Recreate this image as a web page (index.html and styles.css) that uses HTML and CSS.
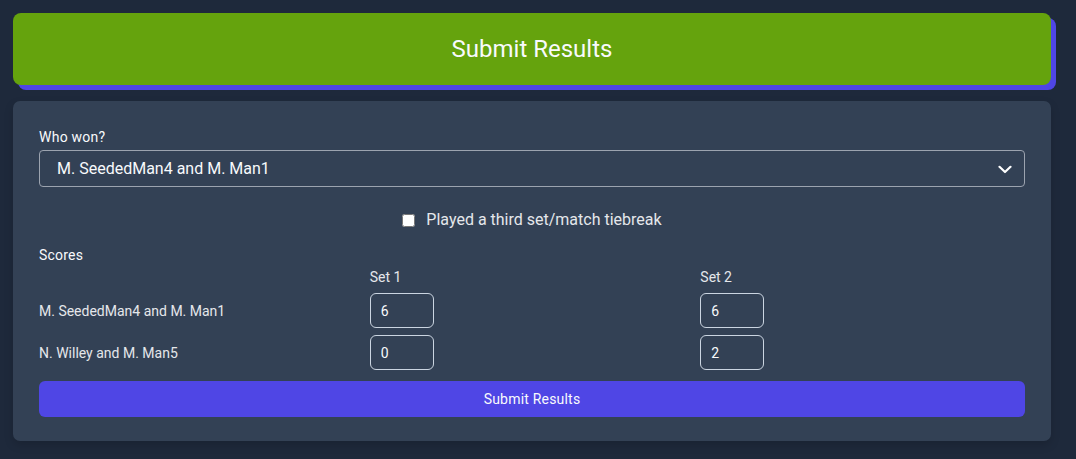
FILE: index.html
```html
<!DOCTYPE html>
<html lang="en">
<head>
<meta charset="utf-8">
<title>Submit Results</title>
<link rel="stylesheet" href="styles.css">
</head>
<body>
<main class="page">
  <button class="hero-btn" type="button">Submit Results</button>
  <section class="card">
    <label class="field-label" for="winner">Who won?</label>
    <div class="select-wrap">
      <select id="winner" class="select">
        <option>M. SeededMan4 and M. Man1</option>
        <option>N. Willey and M. Man5</option>
      </select>
      <svg class="chevron" width="14" height="9" viewBox="0 0 14 9" aria-hidden="true">
        <path d="M1.5 1.8 L7 7 L12.5 1.8" fill="none" stroke="#ffffff" stroke-width="2.2" stroke-linecap="round" stroke-linejoin="round"/>
      </svg>
    </div>
    <div class="check-row">
      <input type="checkbox" id="third" class="check">
      <label for="third" class="check-label">Played a third set/match tiebreak</label>
    </div>
    <div class="scores-title">Scores</div>
    <div class="scores">
      <div></div>
      <div class="set-head">Set 1</div>
      <div class="set-head">Set 2</div>

      <div class="team">M. SeededMan4 and M. Man1</div>
      <div><input class="score" type="text" value="6"></div>
      <div><input class="score" type="text" value="6"></div>

      <div class="team">N. Willey and M. Man5</div>
      <div><input class="score" type="text" value="0"></div>
      <div><input class="score" type="text" value="2"></div>
    </div>
    <button class="submit-btn" type="button">Submit Results</button>
  </section>
</main>
</body>
</html>
```

FILE: styles.css
```css
* { box-sizing: border-box; }

html, body {
  margin: 0;
  height: 100%;
}

body {
  background: #1e293b;
  font-family: Roboto, "Liberation Sans", sans-serif;
  color: #f1f5f9;
}

.page {
  padding: 13px 25px 13px 13px;
  display: flex;
  flex-direction: column;
}

.hero-btn {
  display: block;
  width: 100%;
  height: 72px;
  border: none;
  border-radius: 8px;
  background: #65a30d;
  color: #f8fafc;
  font-family: Roboto, "Liberation Sans", sans-serif;
  font-size: 24px;
  font-weight: 400;
  box-shadow: 5px 5px 0 #4f46e5;
  margin: 0 0 16px 0;
  padding: 0;
  cursor: pointer;
}

.card {
  background: #334155;
  border-radius: 7px;
  padding: 26px 26px 24px 26px;
  box-shadow: 0 4px 10px rgba(0, 0, 0, 0.15);
  display: flex;
  flex-direction: column;
}

.field-label {
  font-size: 14px;
  line-height: 20px;
  letter-spacing: 0.25px;
  color: #f8fafc;
  margin-bottom: 3px;
}

.select-wrap {
  position: relative;
}

.select {
  -webkit-appearance: none;
  appearance: none;
  width: 100%;
  height: 37px;
  background: #334155;
  border: 1px solid #9ca3af;
  border-radius: 4px;
  color: #f8fafc;
  font-family: Roboto, "Liberation Sans", sans-serif;
  font-size: 16px;
  padding: 0 40px 0 17px;
  outline: none;
}

.chevron {
  position: absolute;
  right: 13px;
  top: 15px;
  pointer-events: none;
}

.check-row {
  display: flex;
  justify-content: center;
  align-items: center;
  gap: 11px;
  margin-top: 21px;
  height: 24px;
}

.check {
  width: 13px;
  height: 13px;
  margin: 0;
}

.check-label {
  font-size: 16px;
  line-height: 24px;
  color: #e5e7eb;
}

.scores-title {
  margin-top: 13px;
  font-size: 14px;
  line-height: 20px;
  letter-spacing: 0.2px;
  color: #f8fafc;
}

.scores {
  display: grid;
  grid-template-columns: 1fr 1fr 1fr;
  column-gap: 6px;
  row-gap: 7px;
  margin-top: 2px;
  align-items: center;
}

.set-head {
  font-size: 14px;
  line-height: 20px;
  color: #e5e7eb;
  margin-bottom: -1px;
}

.team {
  font-size: 14px;
  line-height: 20px;
  color: #e5e7eb;
}

.score {
  display: block;
  width: 64px;
  height: 35px;
  background: #334155;
  border: 1px solid #cbd5e1;
  border-radius: 6px;
  color: #f8fafc;
  font-family: Roboto, "Liberation Sans", sans-serif;
  font-size: 14px;
  padding: 0 10px;
  outline: none;
}

.submit-btn {
  margin-top: 11px;
  width: 100%;
  height: 36px;
  border: none;
  border-radius: 6px;
  background: #4f46e5;
  color: #f8fafc;
  font-family: Roboto, "Liberation Sans", sans-serif;
  font-size: 14px;
  letter-spacing: 0.2px;
  cursor: pointer;
}
```
